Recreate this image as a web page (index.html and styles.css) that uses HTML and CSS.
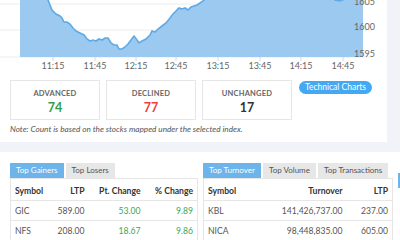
FILE: index.html
```html
<!DOCTYPE html>
<html lang="en">
<head>
  <meta charset="UTF-8">
  <title>Market Summary</title>
  <link rel="stylesheet" href="styles.css">
</head>
<body>

<!-- Index chart card -->
<div class="index-card">
  <svg class="chart" width="387" height="72" viewBox="0 0 387 72">
    <g class="grid">
      <line x1="0" y1="4" x2="372" y2="4" />
      <line x1="0" y1="30" x2="372" y2="30" />
      <line x1="0" y1="57" x2="372" y2="57" />
    </g>
    <path class="area" d="M20,-15 L40,-12 L46,-5 L48,0 L52,10 L56,14 L60,16 L62,18 L64,22 L67,22 L70,24 L73,28 L76,31 L80,33 L84,35 L87,39 L90,41 L93,40 L96,41 L99,39 L102,40 L105,38 L108,38 L111,43 L114,45 L117,45 L119,49 L122,49 L125,47 L128,44 L131,40 L134,36 L137,40 L139,43 L142,41 L146,39 L150,35 L152,31 L155,32 L158,29 L162,26 L166,23 L170,18 L173,14 L176,11 L179,8 L182,9 L185,8 L188,10 L191,7 L194,6 L197,5 L200,3 L203,1 L206,-2 L220,-10 L330,-10 L335,0 L340,1 L345,-1 L350,-8 L363,-10 L363,57 L20,57 Z" />
    <path class="line" d="M20,-15 L40,-12 L46,-5 L48,0 L52,10 L56,14 L60,16 L62,18 L64,22 L67,22 L70,24 L73,28 L76,31 L80,33 L84,35 L87,39 L90,41 L93,40 L96,41 L99,39 L102,40 L105,38 L108,38 L111,43 L114,45 L117,45 L119,49 L122,49 L125,47 L128,44 L131,40 L134,36 L137,40 L139,43 L142,41 L146,39 L150,35 L152,31 L155,32 L158,29 L162,26 L166,23 L170,18 L173,14 L176,11 L179,8 L182,9 L185,8 L188,10 L191,7 L194,6 L197,5 L200,3 L203,1 L206,-2 L220,-10 L330,-10 L335,0 L340,1 L345,-1 L350,-8 L363,-10" />
    <g class="ticks">
      <line x1="53" y1="57" x2="53" y2="61" />
      <line x1="95" y1="57" x2="95" y2="61" />
      <line x1="136" y1="57" x2="136" y2="61" />
      <line x1="176" y1="57" x2="176" y2="61" />
      <line x1="218" y1="57" x2="218" y2="61" />
      <line x1="260" y1="57" x2="260" y2="61" />
      <line x1="301" y1="57" x2="301" y2="61" />
      <line x1="343" y1="57" x2="343" y2="61" />
    </g>
    <g class="x-labels">
      <text x="53" y="69">11:15</text>
      <text x="95" y="69">11:45</text>
      <text x="136" y="69">12:15</text>
      <text x="176" y="69">12:45</text>
      <text x="218" y="69">13:15</text>
      <text x="260" y="69">13:45</text>
      <text x="301" y="69">14:15</text>
      <text x="343" y="69">14:45</text>
    </g>
    <g class="y-labels">
      <text x="354" y="5">1605</text>
      <text x="354" y="30">1600</text>
      <text x="354" y="57">1595</text>
    </g>
  </svg>

  <!-- Advance / decline counts -->
  <div class="stats-row">
    <div class="stat-box">
      <div class="stat-label">ADVANCED</div>
      <div class="stat-value up">74</div>
    </div>
    <div class="stat-box">
      <div class="stat-label">DECLINED</div>
      <div class="stat-value down">77</div>
    </div>
    <div class="stat-box">
      <div class="stat-label">UNCHANGED</div>
      <div class="stat-value">17</div>
    </div>
    <button class="tech-btn">Technical Charts</button>
  </div>
  <div class="note">Note: Count is based on the stocks mapped under the selected index.</div>
</div>

<!-- Top lists -->
<div class="lists-card">
  <div class="list-col gainers">
    <div class="tabs">
      <span class="tab active">Top Gainers</span>
      <span class="tab">Top Losers</span>
    </div>
    <table class="list-table">
      <colgroup><col style="width:40px"><col style="width:38px"><col style="width:56px"><col style="width:53px"></colgroup>
      <tr><th class="left">Symbol</th><th>LTP</th><th>Pt. Change</th><th>% Change</th></tr>
      <tr><td class="left">GIC</td><td>589.00</td><td class="up">53.00</td><td class="up">9.89</td></tr>
      <tr><td class="left">NFS</td><td>208.00</td><td class="up">18.67</td><td class="up">9.86</td></tr>
      <tr><td class="left">&nbsp;</td><td></td><td></td><td></td></tr>
    </table>
  </div>

  <div class="list-col turnover">
    <div class="tabs">
      <span class="tab active">Top Turnover</span>
      <span class="tab">Top Volume</span>
      <span class="tab">Top Transactions</span>
    </div>
    <table class="list-table">
      <colgroup><col style="width:60px"><col style="width:83px"><col style="width:46px"></colgroup>
      <tr><th class="left">Symbol</th><th>Turnover</th><th>LTP</th></tr>
      <tr><td class="left">KBL</td><td>141,426,737.00</td><td>237.00</td></tr>
      <tr><td class="left">NICA</td><td>98,448,835.00</td><td>605.00</td></tr>
      <tr><td class="left">&nbsp;</td><td></td><td></td></tr>
    </table>
  </div>

  <div class="list-col brokers">
    <div class="tabs">
      <span class="tab active">Top Brokers</span>
    </div>
  </div>
</div>

</body>
</html>
```

FILE: styles.css
```css
body {
  margin: 0;
  font-family: Lato, "Open Sans", sans-serif;
  background-color: #f1f3f8;
  width: 400px;
  height: 240px;
  overflow: hidden;
}
.index-card {
  background-color: #fff;
  width: 387px;
  height: 142px;
}
.chart {
  display: block;
}
.grid line {
  stroke: #ececec;
  stroke-width: 1;
}
.area {
  fill: #9bc9f0;
}
.line {
  fill: none;
  stroke: #5eaae6;
  stroke-width: 1.6;
}
.ticks line {
  stroke: #cfd8e3;
  stroke-width: 1;
}
.x-labels text {
  font-size: 9px;
  fill: #666;
  text-anchor: middle;
}
.y-labels text {
  font-size: 9px;
  fill: #666;
}
.stats-row {
  display: flex;
  align-items: flex-start;
  gap: 6px;
  padding: 8px 0 0 10px;
}
.stat-box {
  width: 88px;
  height: 38px;
  border: 1px solid #e6e6e6;
  text-align: center;
}
.stat-label {
  font-size: 7.5px;
  font-weight: bold;
  color: #666;
  margin-top: 8px;
  letter-spacing: 0.2px;
}
.stat-value {
  font-size: 12.5px;
  font-weight: bold;
  color: #333;
  margin-top: 2px;
}
.up {
  color: #2f9e4f;
}
.down {
  color: #f04040;
}
.tech-btn {
  margin: 1px 0 0 1px;
  height: 13px;
  padding: 0 6px;
  font-family: Lato, "Open Sans", sans-serif;
  font-size: 8.5px;
  color: #fff;
  background-color: #45a8f2;
  border: none;
  border-radius: 7px;
  line-height: 13px;
}
.note {
  font-size: 8.2px;
  font-style: italic;
  color: #555;
  padding: 4px 0 0 10px;
}
.lists-card {
  background-color: #fff;
  margin-top: 10px;
  height: 100px;
  display: flex;
  gap: 6px;
  padding: 11px 0 0 10px;
}
.list-col {
  flex-shrink: 0;
}
.gainers {
  width: 187px;
}
.turnover {
  width: 189px;
}
.brokers {
  width: 100px;
  padding-top: 10px;
}
.tabs {
  display: flex;
  gap: 2px;
}
.tab {
  flex-shrink: 0;
  white-space: nowrap;
  height: 15px;
  line-height: 15px;
  padding: 0 6px;
  font-size: 8px;
  color: #555;
  background-color: #e7e7e7;
}
.tab.active {
  background-color: #6cb4ea;
  color: #fff;
}
.list-table {
  border-collapse: collapse;
  table-layout: fixed;
  width: 100%;
  font-size: 8.6px;
  color: #555;
}
.list-table th,
.list-table td {
  border-top: 1px solid #e6e6e6;
  text-align: right;
  padding: 0 4px;
  height: 19px;
  white-space: nowrap;
}
.list-table th {
  height: 18px;
  padding-top: 3px;
  color: #333;
  font-weight: bold;
}
.list-table tr > :first-child {
  border-left: 1px solid #e6e6e6;
}
.list-table tr > :last-child {
  border-right: 1px solid #e6e6e6;
}
.list-table .left {
  text-align: left;
}
.list-table td.up {
  color: #3aa757;
}
```
